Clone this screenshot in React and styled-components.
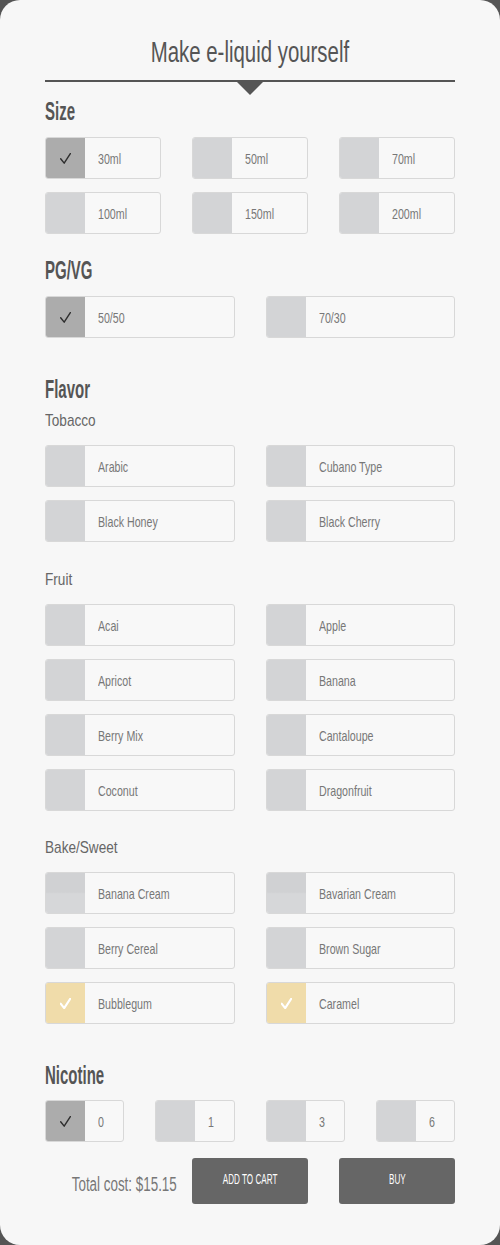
import React from "react";
import styled, { createGlobalStyle } from "styled-components";

const SIZES = [
  { label: "30ml", checked: true },
  { label: "50ml" },
  { label: "70ml" },
  { label: "100ml" },
  { label: "150ml" },
  { label: "200ml" },
];

const RATIOS = [{ label: "50/50", checked: true }, { label: "70/30" }];

const FLAVORS = [
  {
    group: "Tobacco",
    items: [
      { label: "Arabic" },
      { label: "Cubano Type" },
      { label: "Black Honey" },
      { label: "Black Cherry" },
    ],
  },
  {
    group: "Fruit",
    items: [
      { label: "Acai" },
      { label: "Apple" },
      { label: "Apricot" },
      { label: "Banana" },
      { label: "Berry Mix" },
      { label: "Cantaloupe" },
      { label: "Coconut" },
      { label: "Dragonfruit" },
    ],
  },
  {
    group: "Bake/Sweet",
    items: [
      { label: "Banana Cream", hovered: true },
      { label: "Bavarian Cream", hovered: true },
      { label: "Berry Cereal" },
      { label: "Brown Sugar" },
      { label: "Bubblegum", checked: true, tone: "gold" },
      { label: "Caramel", checked: true, tone: "gold" },
    ],
  },
];

const NICOTINE = [{ label: "0", checked: true }, { label: "1" }, { label: "3" }, { label: "6" }];

function Tick({ light }) {
  return (
    <svg width="11" height="11" viewBox="0 0 10 10" fill="none">
      <polyline
        points="0.6,5.2 3.8,9.2 9.4,0.6"
        stroke={light ? "#ffffff" : "#2e2e2e"}
        strokeWidth={light ? 1.9 : 1.3}
        strokeLinecap="round"
        strokeLinejoin="round"
      />
    </svg>
  );
}

function Option({ label, checked, tone, hovered }) {
  return (
    <Box>
      <Check $checked={checked} $tone={tone} $hovered={hovered}>
        {checked && <Tick light={tone === "gold"} />}
      </Check>
      <LabelCell>
        <Label>{label}</Label>
      </LabelCell>
    </Box>
  );
}

function App() {
  return (
    <>
      <GlobalStyle />
      <Card>
        <Header>
          <Title>Make e-liquid yourself</Title>
        </Header>

        <Section $top={14}>
          <Heading>Size</Heading>
          <Grid $cols={3}>
            {SIZES.map((o) => (
              <Option key={o.label} {...o} />
            ))}
          </Grid>
        </Section>

        <Section $top={21}>
          <Heading>PG/VG</Heading>
          <Grid $cols={2}>
            {RATIOS.map((o) => (
              <Option key={o.label} {...o} />
            ))}
          </Grid>
        </Section>

        <Section $top={36}>
          <Heading $gap={0}>Flavor</Heading>
          {FLAVORS.map((f, i) => (
            <Group key={f.group} $top={i === 0 ? 5 : i === 1 ? 26 : 25}>
              <SubHeading>
                <SubText>{f.group}</SubText>
              </SubHeading>
              <Grid $cols={2}>
                {f.items.map((o) => (
                  <Option key={o.label} {...o} />
                ))}
              </Grid>
            </Group>
          ))}
        </Section>

        <Section $top={36}>
          <Heading $gap={10}>Nicotine</Heading>
          <Grid $cols={4}>
            {NICOTINE.map((o) => (
              <Option key={o.label} {...o} />
            ))}
          </Grid>
        </Section>

        <Footer>
          <TotalCell>
            <Total>Total cost: $15.15</Total>
          </TotalCell>
          <Button>
            <ButtonText>Add to cart</ButtonText>
          </Button>
          <Button>
            <ButtonText>Buy</ButtonText>
          </Button>
        </Footer>
      </Card>
    </>
  );
}

const GlobalStyle = createGlobalStyle`
    html, body {
        margin: 0;
        padding: 0;
        background: #555555;
    }
    * {
        box-sizing: border-box;
    }
`;

const Card = styled.div`
    width: 500px;
    min-height: 1245px;
    background: #f7f7f7;
    border-radius: 20px;
    padding: 0 45px 40px;
    font-family: "Liberation Sans", Arial, sans-serif;
    color: #555555;
`;

const Header = styled.div`
    position: relative;
    padding: 32px 0 8px;
    border-bottom: 2px solid #555555;
    text-align: center;

    &::after {
        content: "";
        position: absolute;
        left: 50%;
        top: 100%;
        margin-left: -15px;
        border-top: 15px solid #555555;
        border-left: 15px solid transparent;
        border-right: 15px solid transparent;
    }
`;

/* the reference face is a tall, very narrow one: squeeze the text horizontally */
const Title = styled.h1`
    display: inline-block;
    margin: 0;
    font-size: 30px;
    line-height: 40px;
    font-weight: 400;
    color: #555555;
    white-space: nowrap;
    transform: scaleX(0.68);
    transform-origin: center;
`;

const Section = styled.section`
    margin-top: ${(p) => p.$top}px;
`;

const Heading = styled.h2`
    margin: 0 0 ${(p) => (p.$gap ?? 11)}px;
    font-size: 25px;
    line-height: 30px;
    font-weight: 700;
    color: #555555;
    transform: scaleX(0.6);
    transform-origin: left center;
`;

const Group = styled.div`
    margin-top: ${(p) => p.$top}px;
`;

const SubHeading = styled.h3`
    margin: 0 0 12px;
    font-size: 17px;
    line-height: 24px;
    font-weight: 400;
    color: #666666;
`;

const SubText = styled.span`
    display: inline-block;
    transform: scaleX(0.8);
    transform-origin: left center;
`;

const Grid = styled.div`
    display: grid;
    grid-template-columns: repeat(${(p) => p.$cols}, 1fr);
    column-gap: 31px;
    row-gap: 13px;
`;

const Box = styled.div`
    display: flex;
    height: 42px;
    border: 1px solid #d8d8d8;
    border-radius: 3px;
    background: #f8f8f8;
    overflow: hidden;
`;

const Check = styled.div`
    flex: 0 0 39px;
    display: flex;
    align-items: center;
    justify-content: center;
    background: ${(p) =>
        p.$tone === "gold"
            ? "#f0dcaa"
            : p.$checked
            ? "#acacac"
            : p.$hovered
            ? "linear-gradient(#d0d1d3 0%, #d0d1d3 48%, #d6d7d9 52%, #d6d7d9 100%)"
            : "#d3d4d6"};
`;

const LabelCell = styled.div`
    display: flex;
    align-items: center;
    padding-left: 13px;
    min-width: 0;
`;

const Label = styled.span`
    display: inline-block;
    font-size: 15px;
    color: #777777;
    white-space: nowrap;
    transform: scaleX(0.71);
    transform-origin: left center;
`;

const Footer = styled.div`
    display: flex;
    align-items: center;
    gap: 31px;
    margin-top: 16px;
`;

const TotalCell = styled.div`
    flex: 1 1 auto;
    min-width: 0;
    display: flex;
    justify-content: flex-end;
    margin-right: -16px;
    padding-top: 6px;
`;

const Total = styled.span`
    display: inline-block;
    flex: 0 0 auto;
    font-size: 20px;
    color: #777777;
    white-space: nowrap;
    transform: scaleX(0.67);
    transform-origin: right center;
`;

const Button = styled.button`
    flex: 0 0 116px;
    height: 46px;
    border: none;
    border-radius: 3px;
    background: #666666;
    color: #ffffff;
    font-family: inherit;
    padding: 0 0 4px;
`;

const ButtonText = styled.span`
    display: inline-block;
    font-size: 14px;
    text-transform: uppercase;
    white-space: nowrap;
    transform: scaleX(0.58);
    transform-origin: center;
`;

export default App;
